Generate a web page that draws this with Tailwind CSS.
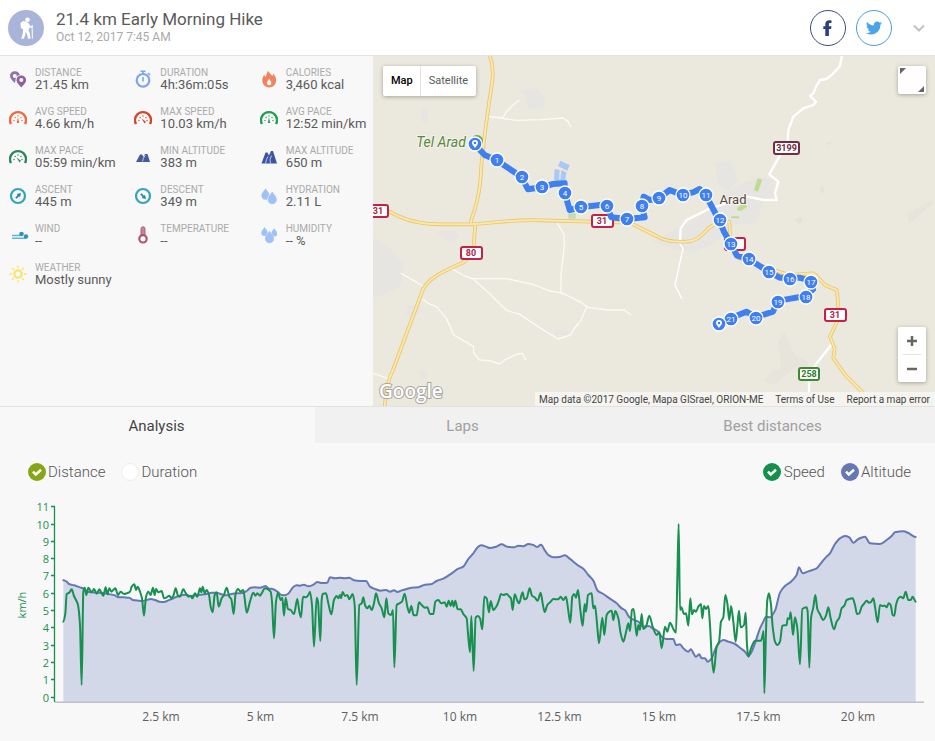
<!DOCTYPE html>
<html lang="en">
<head>
<meta charset="utf-8">
<meta name="viewport" content="width=device-width, initial-scale=1">
<title>21.4 km Early Morning Hike</title>
<script src="https://cdn.jsdelivr.net/npm/@tailwindcss/browser@4"></script>
</head>
<body class="flex min-h-screen flex-col bg-[#f8f8f8] font-['Roboto','Liberation_Sans',sans-serif] text-[#5a5a5a]">

<header class="flex h-14 items-center border-b border-[#e2e2e2] bg-white px-2">
  <svg class="size-9 shrink-0" viewBox="0 0 36 36" aria-hidden="true">
    <circle cx="18" cy="18" r="18" fill="#a9b4d9"/>
    <g fill="#fff"><circle cx="19.500" cy="9.800" r="2.300"/><path d="M12.500 13 15 11l3 .5.800 6.500-3.600 1.600-2.400-1.500zM17 12l3 .6 2.300 3.400 2.500-.8.400 1-.6.800.3 11.500h-1l-.3-11-2.400.5-.7 2.200 1.300 3 .8 5.500h-2.600l-.9-4.300-1.300-2.500-.6 3.200-1.300 3.600h-2.700l1.400-4.500.6-6z"/></g>
  </svg>
  <div class="ml-3 min-w-0 flex-1 pb-0.5">
    <h1 class="text-[17px] leading-5">21.4 km Early Morning Hike</h1>
    <p class="text-xs leading-4 text-[#aaa]">Oct 12, 2017 7:45 AM</p>
  </div>
  <div class="flex items-center gap-2.5">
    <button type="button" aria-label="Share on Facebook" class="grid size-9 place-items-center rounded-full border border-[#3b4a86]">
      <svg class="size-4" viewBox="0 0 16 16" fill="#2e3f80"><path d="M5.300 16V9H3.300V6.200h2V4.300C5.300 1.700 6.800.3 9.300.3c1 0 1.800.1 2.200.1v2.700h-1.300c-1 0-1.300.5-1.300 1.300v1.800h2.600L11.100 9H8.900v7z"/></svg>
    </button>
    <button type="button" aria-label="Share on Twitter" class="grid size-9 place-items-center rounded-full border border-[#4a9bdc]">
      <svg class="size-4" viewBox="0 0 24 24" fill="#4ba3ea"><path d="M24 4.600a10 10 0 0 1-2.800.8 5 5 0 0 0 2.100-2.700 10 10 0 0 1-3.100 1.200 4.900 4.900 0 0 0-8.400 4.500A14 14 0 0 1 1.700 3.100a4.900 4.900 0 0 0 1.500 6.600 5 5 0 0 1-2.200-.6 4.900 4.900 0 0 0 3.900 4.900 5 5 0 0 1-2.200.1 4.900 4.900 0 0 0 4.600 3.400A10 10 0 0 1 0 19.500 14 14 0 0 0 21.500 7.100 10 10 0 0 0 24 4.600z"/></svg>
    </button>
    <button type="button" aria-label="More" class="ml-[9px] grid size-4 place-items-center">
      <svg class="h-2 w-3" viewBox="0 0 12 8" fill="none" stroke="#c2c2c2" stroke-width="2"><path d="m1 1.500 5 5 5-5"/></svg>
    </button>
  </div>
</header>

<main class="flex flex-1 flex-col">
<div class="flex min-h-[350px]">
  <section aria-label="Summary" class="w-2/5 max-w-[373px] shrink-0 bg-[#f8f8f8] pt-[11px]">
    <svg class="hidden" aria-hidden="true">
      <symbol id="gauge" viewBox="0 0 18 18"><path d="M2 15a8 8 0 1 1 14 0" fill="none" stroke="currentColor" stroke-width="2.400"/><g fill="currentColor"><circle cx="5" cy="11.500" r=".7"/><circle cx="6.200" cy="8.500" r=".7"/><circle cx="9" cy="7" r=".7"/><circle cx="12" cy="8.500" r=".7"/><circle cx="13" cy="11.500" r=".7"/></g></symbol>
      <symbol id="drop" viewBox="0 0 10 13"><path d="M5 0c1.500 3 4.600 5 4.600 8.200A4.600 4.600 0 0 1 5 12.900 4.600 4.600 0 0 1 .4 8.200C.4 5 3.500 3 5 0z" fill="#9fc0f8"/></symbol>
    </svg>
    <dl class="grid grid-cols-3 gap-y-[15px]">
      <div class="flex h-6 items-center gap-2 pl-[9px]">
        <svg class="size-[18px] shrink-0" viewBox="0 0 18 18" aria-hidden="true"><path fill="#9272ab" fill-rule="evenodd" d="M5.800 1.200a5 5 0 0 1 5 3.800 6 6 0 0 0-4.400 6L5.800 13C3.500 10.500 1 8.500 1 6a4.800 4.800 0 0 1 4.800-4.800zM5.800 4a2 2 0 1 0 0 4.100 2 2 0 0 0 0-4.100z"/><path fill="#8e5f9c" fill-rule="evenodd" d="M12.300 5.500a4.800 4.800 0 0 1 4.800 4.700c0 2.500-2.500 4.500-4.800 7.300-2.300-2.800-4.800-4.800-4.800-7.300a4.800 4.800 0 0 1 4.800-4.700zm0 2.500a2 2 0 1 0 0 4.100 2 2 0 0 0 0-4.100z"/></svg>
        <div class="whitespace-nowrap"><dt class="text-[10px] leading-3 text-[#aaa]">DISTANCE</dt><dd class="text-[13px] leading-3">21.45 km</dd></div>
      </div>
      <div class="flex h-6 items-center gap-2 pl-2.5">
        <svg class="size-[18px] shrink-0" viewBox="0 0 18 18" aria-hidden="true" fill="none" stroke="#7da4ec"><circle cx="9" cy="10.300" r="6.300" stroke-width="2.200"/><path d="M6.500 1.300h5M9 1v3M14 3l2 2M9 7v4.500" stroke-width="1.600"/></svg>
        <div class="whitespace-nowrap"><dt class="text-[10px] leading-3 text-[#aaa]">DURATION</dt><dd class="text-[13px] leading-3">4h:36m:05s</dd></div>
      </div>
      <div class="flex h-6 items-center gap-2 pl-[11px]">
        <svg class="size-[18px] shrink-0" viewBox="0 0 18 18" aria-hidden="true"><path fill="#f0845f" fill-rule="evenodd" d="M8 .5c.5 2 3 3.500 4.200 5.500.8-.5 1-1.300 1-2.200 1.800 1.500 3 4.200 3 6.700a7 7 0 0 1-14 0c0-2.500 1-4.500 2.200-6 .1 1.300.5 2 1.300 2.500C6 4.800 7.500 3 8 .5zM9.200 8.500c-.4 1.500-2.200 2.700-2.200 4.500a2.200 2.200 0 0 0 4.400 0c0-1.800-1.800-2.800-2.200-4.500z"/></svg>
        <div class="whitespace-nowrap"><dt class="text-[10px] leading-3 text-[#aaa]">CALORIES</dt><dd class="text-[13px] leading-3">3,460 kcal</dd></div>
      </div>

      <div class="flex h-6 items-center gap-2 pl-[9px]">
        <svg class="size-[18px] shrink-0 text-[#ec6a3c]" viewBox="0 0 18 18" aria-hidden="true"><use href="#gauge"/><path d="m9 8 1.200 6H7.800z" fill="currentColor"/></svg>
        <div class="whitespace-nowrap"><dt class="text-[10px] leading-3 text-[#aaa]">AVG SPEED</dt><dd class="text-[13px] leading-3">4.66 km/h</dd></div>
      </div>
      <div class="flex h-6 items-center gap-2 pl-2.5">
        <svg class="size-[18px] shrink-0 text-[#d4452c]" viewBox="0 0 18 18" aria-hidden="true"><use href="#gauge"/><path d="m7.500 9.500 4.500 3.300-1.300 1.700z" fill="currentColor"/></svg>
        <div class="whitespace-nowrap"><dt class="text-[10px] leading-3 text-[#aaa]">MAX SPEED</dt><dd class="text-[13px] leading-3">10.03 km/h</dd></div>
      </div>
      <div class="flex h-6 items-center gap-2 pl-[11px]">
        <svg class="size-[18px] shrink-0 text-[#1ea052]" viewBox="0 0 18 18" aria-hidden="true"><use href="#gauge"/><path d="m9 8 1.200 6H7.800z" fill="currentColor"/></svg>
        <div class="whitespace-nowrap"><dt class="text-[10px] leading-3 text-[#aaa]">AVG PACE</dt><dd class="text-[13px] leading-3">12:52 min/km</dd></div>
      </div>

      <div class="flex h-6 items-center gap-2 pl-[9px]">
        <svg class="size-[18px] shrink-0 text-[#2e8560]" viewBox="0 0 18 18" aria-hidden="true"><use href="#gauge"/><path d="m7.500 9.500 4.500 3.300-1.300 1.700z" fill="currentColor"/></svg>
        <div class="whitespace-nowrap"><dt class="text-[10px] leading-3 text-[#aaa]">MAX PACE</dt><dd class="text-[13px] leading-3">05:59 min/km</dd></div>
      </div>
      <div class="flex h-6 items-center gap-2 pl-2.5">
        <svg class="size-[18px] shrink-0" viewBox="0 0 18 18" aria-hidden="true"><path fill="#44599f" d="M2 14 6 6.500h2L9.500 9 11 6h2.500L16 14z"/><path d="m8.500 13.500 1-3.500 2-3" fill="none" stroke="#dfe4f5" stroke-width=".8"/></svg>
        <div class="whitespace-nowrap"><dt class="text-[10px] leading-3 text-[#aaa]">MIN ALTITUDE</dt><dd class="text-[13px] leading-3">383 m</dd></div>
      </div>
      <div class="flex h-6 items-center gap-2 pl-[11px]">
        <svg class="size-[18px] shrink-0" viewBox="0 0 18 18" aria-hidden="true"><path fill="#3c55a5" d="M1.500 15.500 5.500 4.500H7.500L9 7.500l2-4.500h2l4 12.500z"/><path d="m5.500 15.500 1-4 1.500-3M10.500 15.500l-.5-4 1.500-4" fill="none" stroke="#dfe4f5" stroke-width=".8"/></svg>
        <div class="whitespace-nowrap"><dt class="text-[10px] leading-3 text-[#aaa]">MAX ALTITUDE</dt><dd class="text-[13px] leading-3">650 m</dd></div>
      </div>

      <div class="flex h-6 items-center gap-2 pl-[9px]">
        <svg class="size-[18px] shrink-0" viewBox="0 0 18 18" aria-hidden="true"><circle cx="9" cy="9" r="7" fill="none" stroke="#30a5bd" stroke-width="2.200"/><path fill="#2b83ad" d="m12 6-1 4.300-1-1L7.500 11.800 6.200 10.500 8.700 8l-1-1z"/></svg>
        <div class="whitespace-nowrap"><dt class="text-[10px] leading-3 text-[#aaa]">ASCENT</dt><dd class="text-[13px] leading-3">445 m</dd></div>
      </div>
      <div class="flex h-6 items-center gap-2 pl-2.5">
        <svg class="size-[18px] shrink-0" viewBox="0 0 18 18" aria-hidden="true"><circle cx="9" cy="9" r="7" fill="none" stroke="#30a5bd" stroke-width="2.200"/><path fill="#2b83ad" d="m12 12-4.300-1 1-1L6.200 7.500 7.500 6.200 10 8.700l1-1z"/></svg>
        <div class="whitespace-nowrap"><dt class="text-[10px] leading-3 text-[#aaa]">DESCENT</dt><dd class="text-[13px] leading-3">349 m</dd></div>
      </div>
      <div class="flex h-6 items-center gap-2 pl-[11px]">
        <svg class="size-[18px] shrink-0" viewBox="0 0 18 18" aria-hidden="true"><use href="#drop" x="1" y="1" width="9" height="12"/><g stroke="#f8f8f8" stroke-width=".6"><use href="#drop" x="7" y="4" width="10.500" height="13.500"/></g></svg>
        <div class="whitespace-nowrap"><dt class="text-[10px] leading-3 text-[#aaa]">HYDRATION</dt><dd class="text-[13px] leading-3">2.11 L</dd></div>
      </div>

      <div class="flex h-6 items-center gap-2 pl-[9px]">
        <svg class="size-[18px] shrink-0 overflow-visible" viewBox="0 0 18 18" aria-hidden="true"><path d="M3 9.500h8M3 12.300h14" stroke="#5fb6d0" stroke-width="1.600"/><circle cx="12.500" cy="8" r="2.300" fill="#2d93ba"/><circle cx="17" cy="10.500" r="2.200" fill="#2d93ba"/></svg>
        <div class="whitespace-nowrap"><dt class="text-[10px] leading-3 text-[#aaa]">WIND</dt><dd class="text-[13px] leading-3">--</dd></div>
      </div>
      <div class="flex h-6 items-center gap-2 pl-2.5">
        <svg class="size-[18px] shrink-0" viewBox="0 0 18 18" aria-hidden="true"><rect x="7" y=".8" width="4" height="11" rx="2" fill="#c98498" stroke="#b35f7c"/><circle cx="9" cy="12.800" r="3.700" fill="#fff" stroke="#ae5372" stroke-width="2.200"/></svg>
        <div class="whitespace-nowrap"><dt class="text-[10px] leading-3 text-[#aaa]">TEMPERATURE</dt><dd class="text-[13px] leading-3">--</dd></div>
      </div>
      <div class="flex h-6 items-center gap-2 pl-[11px]">
        <svg class="size-[18px] shrink-0" viewBox="0 0 18 18" aria-hidden="true"><use href="#drop" x="1" y="1" width="7" height="9"/><use href="#drop" x="11" y="2" width="6.500" height="9"/><g stroke="#f8f8f8" stroke-width=".4"><use href="#drop" x="4.500" y="4.500" width="10" height="13"/></g></svg>
        <div class="whitespace-nowrap"><dt class="text-[10px] leading-3 text-[#aaa]">HUMIDITY</dt><dd class="text-[13px] leading-3">-- %</dd></div>
      </div>

      <div class="flex h-6 items-center gap-2 pl-[9px]">
        <svg class="size-[18px] shrink-0" viewBox="0 0 18 18" aria-hidden="true" fill="none" stroke="#fbe36c"><circle cx="9" cy="9" r="3.700" stroke-width="2.300"/><path stroke-width="1.400" d="M9 .5v2.500M9 15v2.500M.5 9H3M15 9h2.500M3 3l1.700 1.700M13.300 13.300 15 15M3 15l1.700-1.700M13.300 4.700 15 3"/></svg>
        <div class="whitespace-nowrap"><dt class="text-[10px] leading-3 text-[#aaa]">WEATHER</dt><dd class="text-[13px] leading-3">Mostly sunny</dd></div>
      </div>
    </dl>
  </section>

  <section aria-label="Route map" class="relative flex-1 overflow-hidden bg-[#ebe8de]">
    <svg class="absolute inset-0 size-full" viewBox="0 1 562 350" preserveAspectRatio="xMidYMid slice" role="img" aria-label="Hiking route near Arad">
      <g transform="scale(.33333)" fill="none" stroke-linecap="round" stroke-linejoin="round">
        <g fill="#e6e4e3">
          <path d="M0 550l50 30 45 50-10 60-50 30-35 5zM930 510l80-45 60-60 40-20 50-20 40 10 10 60-40 10-20 60-70 5-60 60-60 20-60-10-60-20zM1025 325l50-8 20 60-30 30-30-20zM190 530l50-5 20 20-30 15zM450 105l40-5 30 30-10 30-40 5zM145 160h20v40h-20zM140 945h20v25h-20zM100 750h40v30h-40zM545 825h40v15h-40z" opacity=".7"/>
          <path d="M1215 860l20-30 30 70 40 20-10 40-30-20-60 50-30-10 20-30 30-10zM1600 480l80-50v15l-70 60z" fill="#e2dfd6" opacity=".4"/>
          <path d="M1340 400l10-5 5 15-12 5zM1265 495l25-10-10 25zM1360 265l15-5-5 12z" fill="#dfdccf" opacity=".6"/>
        </g>
        <path fill="#c0dc91" d="M1154 370l14 4-13 36-12-4zM1095 455l20-10 8 10-20 14-12-4zM1075 484h24v6h-24z"/>
        <path fill="#c4dab9" d="M586 475h22v16h-22z"/>
        <g fill="#a9c9f4"><path d="M562 317l28 14-7 16-28-14zM545 342l15 3-2 32-15-3zM565 345l15 7-4 28-14-3zM548 372l34 2v8h-40z"/></g>
        <g stroke="#fbfaf5" stroke-width="4">
          <path d="M350 185L390 188M390 188q8-22 48-52M350 185l80 11 75-2 65-5 15 10 8 16M85 655l65 38M150 733l15 12 25 10 30 35 22 50 35 20 25 15 0 20 18 20 30 2 30 10 18-14 32-15 18-3 10 20M240 643l35 20 25 8 100 0 80 17 50 20 33 5 5 5M300 671l50 45 50 50 40 12 60 40 55 34 38-12 10-18 20-25 20-45M553 505l10 15 10 20 1 30-10 90 0 52 60 30 20 15 60 8 50 0 20 15M0 955l45 15"/>
        </g>
        <g stroke="#fff" stroke-width="7">
          <path d="M1408 -5L1401 33 1381 55 1361 72 1341 75 1329 95 1321 115 1311 123 1329 140 1321 150 1291 160 1261 185 1246 225 1244 260 1216 310 1189 358 1216 380 1206 415 1211 435 1171 435 1126 425 1011 460 941 495 923 520 921 560"/>
          <path stroke-width="4" d="M920 565l10 15-24 110 20 40"/>
          <path d="M1376 868l-45 57-23 35v100"/>
        </g>
        <g stroke="#edc568" stroke-width="11">
          <path id="hw80" d="M348-5c20 50 9 90 2 135L335 240l-10 90c-2 80-15 120-32 172M307 510l-5 60-2 25-30 28c-70 30-105 50-120 80L60 945c-15 30-22 55-25 120"/>
          <path id="hw31" d="M0 455l50 15c50 30 100 38 150 38h93c87-6 137-15 207-12l160 4 110 3 80 40c20 12 50 18 80 17 30 2 50-10 76-40 20-15 40-22 62-20 5 20 0 50 5 75l25 35 60 20 90 30 72-5 6 3 30 32 35 15 4 35-3 60-21 45 14 35-4 30 36 50 60 60 25 40"/>
        </g>
        <g stroke="#f9e8ae" stroke-width="6"><use href="#hw80"/><use href="#hw31"/></g>
      </g>
      <circle cx="104" cy="86" r="6" fill="#6ba748"/>
      <g font-family="Roboto, sans-serif" text-anchor="middle">
        <text x="68" y="92" font-size="14" font-style="italic" fill="#568a39" stroke="#f5f3ee" stroke-width="2" paint-order="stroke">Tel Arad</text>
        <text x="360" y="149" font-size="13" fill="#554a45" stroke="#f5f3ee" stroke-width="2" paint-order="stroke">Arad</text>
        <g font-size="9" font-weight="700" fill="#b01e42">
          <g fill="#fff" stroke="#c4214a" stroke-width="2"><rect x="-8" y="150" width="23" height="12" rx="2"/><rect x="219" y="160" width="21" height="12" rx="2"/><rect x="88" y="192" width="21" height="12" rx="2"/><rect x="352" y="183" width="20" height="12" rx="2"/><rect x="452" y="254" width="21" height="12" rx="2"/></g>
          <text x="5" y="159">31</text><text x="229" y="169">31</text><text x="98" y="201">80</text><text x="462" y="263">31</text>
        </g>
        <rect x="401" y="87" width="25" height="12" rx="2" fill="#fff" stroke="#762b42" stroke-width="2"/>
        <text x="413.500" y="96" font-size="9" font-weight="700" fill="#702a3e">3199</text>
        <rect x="426" y="313" width="20" height="12" rx="2" fill="#fff" stroke="#3d8a32" stroke-width="2"/>
        <text x="436" y="322" font-size="9" font-weight="700" fill="#2f7a28">258</text>
      </g>
      <path transform="scale(.33333)" fill="none" stroke="#3f7ff0" stroke-width="18" stroke-linejoin="round" d="M305 268l30 32 35 15 75 50 20 38 40-6 35-10 35-2v27l15 53 33-8 77-9 2 7 13 32 47 5 53-5-9-32 6-30 18 10 27-5 33-25 18 7 20 6 32-6 20-10 17 16 41 77 15 35 20 35 19 37 35 10 28 18 32 20 33 18h60l33 10 7 25-23 20-57 10-26 5-14 32-25 8-27 8-28-16-48 20-35 15"/>
      <g id="markers" font-family="Roboto, sans-serif" font-size="8" text-anchor="middle" fill="#fff"></g>
      <text x="6" y="343" font-family="Open Sans, sans-serif" font-size="19" font-weight="600" fill="#fff" stroke="#a8a69f" stroke-width="2" paint-order="stroke">Google</text>
    </svg>

    <div class="absolute top-2.5 left-2.5 flex h-[30px] divide-x divide-[#e4e4e4] rounded-xs bg-white text-[11px] shadow-[0_1px_4px_rgba(0,0,0,0.3)]">
      <button type="button" class="pr-[7px] pl-2 font-medium text-black">Map</button>
      <button type="button" class="px-2">Satellite</button>
    </div>
    <button type="button" aria-label="Toggle fullscreen view" class="absolute top-2.5 right-[9px] size-7 rounded-xs bg-white shadow-[0_1px_4px_rgba(0,0,0,0.3)]">
      <svg class="size-7" viewBox="0 0 28 28" fill="#666"><path d="M2 2h6L2 8zM26 20v6h-6z"/></svg>
    </button>
    <div class="absolute right-[9px] bottom-6 flex w-7 flex-col items-center rounded-xs bg-white shadow-[0_1px_4px_rgba(0,0,0,0.3)]">
      <button type="button" aria-label="Zoom in" class="grid h-[27px] w-7 place-items-center"><svg class="size-3" viewBox="0 0 12 12" stroke="#666" stroke-width="2.500"><path d="M1 6h10M6 1v10"/></svg></button>
      <span class="h-px w-[18px] bg-[#e4e4e4]"></span>
      <button type="button" aria-label="Zoom out" class="grid h-[27px] w-7 place-items-center"><svg class="size-3" viewBox="0 0 12 12" stroke="#666" stroke-width="2.500"><path d="M1 6h10"/></svg></button>
    </div>
    <div class="absolute right-0 bottom-0 flex h-3.5 items-center gap-3 bg-[#f5f4f0] pr-[5px] pl-1 text-[10px] whitespace-nowrap text-[#444]">
      <span>Map data ©2017 Google, Mapa GISrael, ORION-ME</span>
      <a href="#">Terms of Use</a>
      <a href="#">Report a map error</a>
    </div>
  </section>
</div>

<nav role="tablist" class="grid h-[37px] grid-cols-[315fr_295fr_325fr] border-t border-[#e2e2e2] bg-[#f1f1f1] text-[15px] text-[#a0a0a0]">
  <button type="button" role="tab" aria-selected="true" class="bg-[#f8f8f8] pt-0.5 pr-0.5 text-[#444]">Analysis</button>
  <button type="button" role="tab" aria-selected="false" class="pt-0.5">Laps</button>
  <button type="button" role="tab" aria-selected="false" class="pt-0.5">Best distances</button>
</nav>

<section aria-label="Analysis" class="flex flex-col">
  <div class="flex justify-between pt-[19px] pr-6 pl-7 text-[15px] leading-5 font-light text-[#555]">
    <div class="flex gap-4">
      <label class="flex items-center gap-0.5"><span class="grid size-[18px]"><input type="radio" name="axis" checked class="col-start-1 row-start-1 size-[18px] appearance-none rounded-full bg-[#86a517]"><svg class="pointer-events-none col-start-1 row-start-1 size-[18px]" viewBox="0 0 18 18" fill="none" stroke="#fff" stroke-width="2.500"><path d="m5 8.700 2.800 2.800L13 6.800"/></svg></span>Distance</label>
      <label class="flex items-center gap-0.5"><input type="radio" name="axis" class="size-[18px] appearance-none rounded-full border border-[#ececec] bg-white">Duration</label>
    </div>
    <div class="flex gap-4">
      <label class="flex items-center gap-[3px]"><span class="grid size-[18px]"><input type="checkbox" checked class="col-start-1 row-start-1 size-[18px] appearance-none rounded-full bg-[#15904b]"><svg class="pointer-events-none col-start-1 row-start-1 size-[18px]" viewBox="0 0 18 18" fill="none" stroke="#fff" stroke-width="2.500"><path d="m5 8.700 2.800 2.800L13 6.800"/></svg></span>Speed</label>
      <label class="flex items-center gap-0.5"><span class="grid size-[18px]"><input type="checkbox" checked class="col-start-1 row-start-1 size-[18px] appearance-none rounded-full bg-[#6577b5]"><svg class="pointer-events-none col-start-1 row-start-1 size-[18px]" viewBox="0 0 18 18" fill="none" stroke="#fff" stroke-width="2.500"><path d="m5 8.700 2.800 2.800L13 6.800"/></svg></span>Altitude</label>
    </div>
  </div>

  <svg class="mt-2 h-auto w-full" viewBox="0 490 935 250" role="img" aria-label="Speed and altitude by distance">
    <g transform="translate(0 405) scale(.33333)" fill="none" stroke-width="6" stroke-linejoin="round" stroke-linecap="round">
      <path id="alt-area" fill="#d3d8e8"/>
      <path d="M165 891.500H2772" stroke="#a3a3ad" stroke-width="3" stroke-linecap="butt"/>
      <path id="alt-line" stroke="#6577b5"/>
      <path id="speed-line" stroke="#179050"/>
    </g>
    <path id="y-axis" fill="none" stroke="#179050" stroke-width="1.300"/>
    <g id="y-labels" font-family="Open Sans, Noto Sans, sans-serif" font-size="11" fill="#179050" text-anchor="end"></g>
    <text transform="translate(26 605) rotate(-90)" text-anchor="middle" font-family="Open Sans, Noto Sans, sans-serif" font-size="11" fill="#179050">km/h</text>
    <g font-family="Open Sans, Noto Sans, sans-serif" font-size="12" fill="#606060" text-anchor="middle">
      <text x="161" y="721">2.5 km</text><text x="260.500" y="721">5 km</text><text x="360" y="721">7.5 km</text><text x="460" y="721">10 km</text><text x="559.500" y="721">12.5 km</text><text x="659" y="721">15 km</text><text x="758.500" y="721">17.5 km</text><text x="858" y="721">20 km</text>
    </g>
  </svg>
</section>
</main>

<script>
const altitude = "190,526 200,530 207,537 222,541 240,547 252,551 262,560 275,562 290,563 310,564 325,567 345,571 352,576 372,577 388,578 398,585 415,587 428,588 440,585 452,582 465,585 478,590 492,591 505,586 520,580 535,573 548,570 560,569 572,574 585,571 600,569 620,567 635,563 650,563 662,567 680,571 695,567 712,565 728,564 740,558 752,548 765,547 780,548 797,543 805,550 820,553 832,560 845,570 855,571 865,566 880,546 890,541 900,542 912,539 925,544 940,539 952,531 965,534 982,533 990,517 1005,520 1020,518 1035,520 1048,518 1062,526 1080,528 1098,528 1110,545 1125,552 1142,557 1158,555 1170,560 1182,556 1192,561 1205,556 1220,552 1235,548 1255,547 1275,539 1292,538 1310,528 1330,521 1355,505 1375,491 1390,485 1405,462 1420,445 1435,425 1445,421 1458,425 1470,429 1488,425 1505,418 1522,425 1542,427 1555,422 1570,424 1585,417 1600,420 1612,426 1623,419 1635,437 1645,450 1660,457 1678,456 1695,451 1708,460 1720,470 1735,482 1750,491 1765,510 1780,527 1793,557 1810,567 1830,581 1850,595 1865,610 1875,616 1888,637 1900,644 1915,650 1930,665 1945,663 1960,671 1975,680 1985,695 1998,702 2020,702 2028,720 2040,718 2050,730 2065,740 2072,733 2088,755 2098,748 2105,760 2115,760 2123,770 2135,760 2145,735 2158,712 2170,705 2185,710 2205,717 2222,730 2235,740 2245,753 2255,740 2265,715 2280,670 2290,650 2298,635 2310,637 2325,617 2340,563 2355,543 2372,531 2390,510 2397,487 2408,505 2425,499 2450,490 2460,478 2475,460 2490,445 2505,417 2520,400 2535,393 2548,397 2560,413 2575,402 2595,395 2610,415 2640,417 2660,405 2675,393 2685,382 2710,379 2725,384 2747,396";
const speed = "190,650 196,625 200,567 208,563 215,553 222,573 228,585 234,600 240,660 245,840 250,560 254,548 259,570 265,548 275,562 282,552 290,566 298,553 305,565 310,572 317,547 322,568 328,550 334,560 346,550 354,570 362,560 372,567 380,565 390,560 395,545 403,538 408,555 413,545 420,560 426,580 432,632 438,575 445,560 452,570 459,548 464,570 468,552 475,562 485,558 492,580 500,577 508,572 514,580 520,573 527,550 534,572 540,575 550,553 556,562 565,575 572,572 577,580 585,565 592,575 600,550 604,562 608,545 614,565 620,555 627,570 632,605 638,622 644,570 650,562 656,605 665,580 672,570 680,548 688,575 694,583 701,627 707,565 714,552 722,560 730,555 734,580 740,623 750,590 760,563 766,572 772,565 780,572 785,565 795,550 812,560 816,590 822,700 828,590 834,563 842,585 847,578 852,632 857,578 864,612 872,615 882,627 892,582 898,620 903,637 909,575 918,577 924,572 930,560 936,600 942,725 950,578 954,590 961,708 965,585 968,567 978,565 985,595 994,628 1002,585 1010,573 1015,580 1020,570 1023,580 1028,561 1035,573 1042,570 1048,583 1058,567 1064,600 1070,840 1078,600 1085,595 1090,577 1095,600 1102,610 1108,602 1115,615 1122,595 1128,565 1137,595 1145,610 1153,637 1159,580 1165,625 1173,630 1179,615 1183,787 1190,600 1198,595 1206,590 1214,566 1222,605 1228,623 1234,603 1241,631 1250,631 1257,592 1265,600 1275,608 1282,607 1290,627 1300,627 1306,590 1315,585 1324,595 1334,592 1340,605 1346,587 1352,603 1357,587 1361,605 1366,587 1373,613 1382,613 1390,627 1400,640 1404,685 1410,742 1414,633 1421,798 1427,638 1434,633 1440,640 1447,673 1453,575 1460,580 1467,622 1472,588 1480,615 1490,603 1497,585 1503,567 1510,570 1520,567 1528,575 1533,580 1538,615 1544,568 1552,587 1557,595 1568,562 1573,583 1580,580 1589,550 1596,572 1604,577 1613,587 1622,563 1628,595 1634,621 1642,600 1652,590 1660,582 1675,583 1682,575 1690,585 1698,575 1704,610 1711,653 1717,575 1723,567 1728,578 1734,555 1741,615 1748,663 1754,597 1758,620 1764,570 1775,565 1780,610 1785,602 1791,655 1797,715 1807,638 1813,690 1820,630 1828,620 1835,617 1840,645 1846,618 1855,640 1862,685 1870,710 1878,682 1885,655 1890,678 1896,615 1901,612 1910,692 1915,660 1920,675 1925,627 1930,672 1938,665 1948,632 1958,665 1970,690 1978,682 1985,730 1995,665 2002,680 2010,653 2020,672 2028,683 2032,520 2036,357 2040,615 2044,607 2052,627 2058,625 2065,662 2071,580 2076,628 2082,615 2088,620 2095,605 2103,597 2107,640 2112,603 2118,612 2125,603 2130,660 2135,750 2141,803 2150,725 2157,712 2163,650 2170,637 2176,570 2182,595 2188,645 2193,603 2200,650 2207,710 2212,665 2217,617 2222,667 2232,660 2237,623 2241,720 2245,755 2253,730 2265,707 2283,707 2288,690 2291,678 2293,865 2298,680 2302,585 2307,565 2313,600 2318,665 2325,710 2332,720 2340,710 2347,662 2360,660 2363,640 2368,642 2372,622 2379,690 2385,637 2392,670 2400,778 2407,612 2420,607 2423,620 2428,788 2433,640 2440,607 2446,570 2452,612 2460,628 2470,645 2478,632 2485,607 2492,640 2502,673 2510,650 2518,638 2525,610 2533,602 2540,585 2558,580 2565,600 2571,627 2578,625 2585,605 2593,595 2600,587 2606,593 2612,592 2620,580 2625,605 2633,652 2640,600 2647,603 2655,602 2660,607 2666,595 2672,600 2678,630 2683,632 2688,600 2695,580 2702,575 2710,580 2717,560 2725,585 2732,585 2738,575 2747,590";
const byId = id => document.getElementById(id);

// Smooth path: horizontal tangents at peaks and dips, so the curve never overshoots
function smooth(data) {
  const p = data.split(" ").map(s => s.split(",").map(Number));
  const slope = p.map((_, i) => {
    if (i === 0 || i === p.length - 1) return 0;
    const a = (p[i][1] - p[i - 1][1]) / (p[i][0] - p[i - 1][0]);
    const b = (p[i + 1][1] - p[i][1]) / (p[i + 1][0] - p[i][0]);
    return a * b <= 0 ? 0 : 2 * a * b / (a + b);
  });
  let d = `M${p[0]}`;
  for (let i = 1; i < p.length; i++) {
    const h = (p[i][0] - p[i - 1][0]) / 3;
    d += `C${p[i - 1][0] + h},${p[i - 1][1] + slope[i - 1] * h} ${p[i][0] - h},${p[i][1] - slope[i] * h} ${p[i]}`;
  }
  return d;
}
byId("alt-area").setAttribute("d", `${smooth(altitude)}L2747,890 190,890z`);
byId("alt-line").setAttribute("d", smooth(altitude));
byId("speed-line").setAttribute("d", smooth(speed));

// Vertical scale: 0 to 11 km/h
let ticks = "", labels = "";
for (let v = 0; v <= 11; v++) {
  const y = Math.round(697.5 - v * 17.3);
  ticks += `M51 ${y - .5}h4`;
  labels += `<text x="49" y="${y + 4}">${v}</text>`;
}
byId("y-axis").setAttribute("d", "M54.500 506.500V702" + ticks);
byId("y-labels").innerHTML = labels;

// Kilometre markers; the first and last are the route's ends
const stops = [[102,89],[124,105],[149,122],[169,132],[192,138],[208,152],[234,151],[254,164],[269,151],[286,143],[310,140],[333,140],[347,165],[358,189],[376,204],[396,217],[417,224],[438,227],[433,242],[405,247],[383,263],[358,264],[346,269]];
byId("markers").innerHTML = stops.map(([x, y], i) => {
  const end = i === 0 || i === stops.length - 1;
  const inner = end
    ? `<path fill-rule="evenodd" d="M${x} ${y + 4}c-1-2-3-3-3-5a3 3 0 0 1 6 0c0 2-2 3-3 5zm0-6.200a1.200 1.200 0 1 0 0 2.400 1.200 1.200 0 0 0 0-2.400z"/>`
    : `<text x="${x}" y="${y + 3}">${i}</text>`;
  return `<circle cx="${x}" cy="${y}" r="7" fill="#3f7ff0" stroke="#fff" stroke-width="1.300"/>${inner}`;
}).join("");
</script>
</body>
</html>
